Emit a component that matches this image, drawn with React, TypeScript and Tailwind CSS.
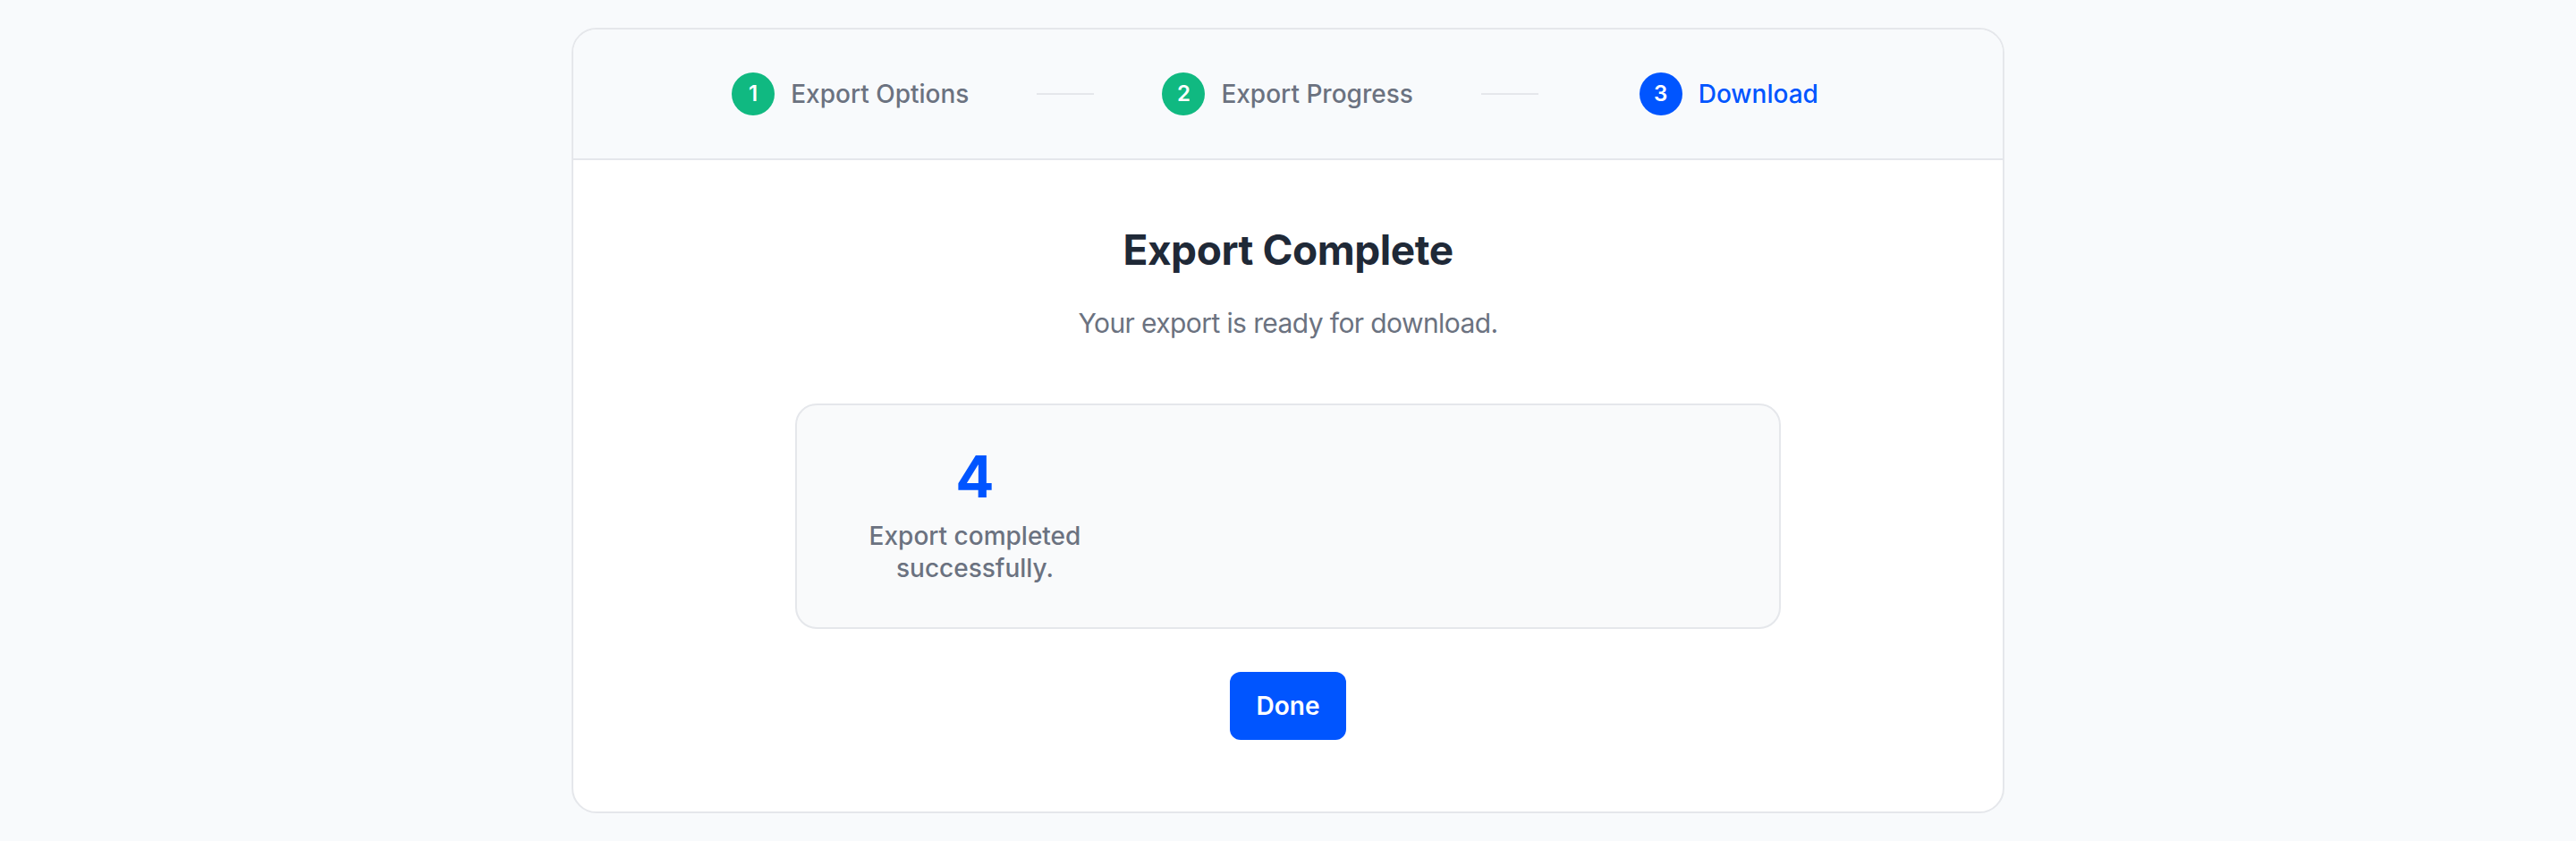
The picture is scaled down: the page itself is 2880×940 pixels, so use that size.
import React from "react";

const font = { fontFamily: "Inter, 'Noto Sans', sans-serif" };

function Step({ n, label, state }: { n: number; label: string; state: "done" | "active" }) {
  const active = state === "active";
  return (
    <div className="flex items-center gap-[18px]">
      <div
        className={`flex h-[48px] w-[48px] items-center justify-center rounded-full text-[24px] font-semibold text-white ${
          active ? "bg-[#0055ff]" : "bg-[#10b981]"
        }`}
      >
        {n}
      </div>
      <span className={`text-[28px] leading-[40px] font-medium ${active ? "text-[#0055ff]" : "text-[#6b7280]"}`}>
        {label}
      </span>
    </div>
  );
}

function Connector() {
  return <div className="h-[2px] w-[64px] bg-[#e5e7eb]" />;
}

export default function App() {
  return (
    <div className="min-h-[940px] w-full bg-[#f8fafc] pt-[31px]" style={font}>
      <div className="mx-auto w-[1602px] overflow-hidden rounded-[28px] border-2 border-[#e5e7eb] bg-white">
        <div className="flex items-center justify-center border-b-2 border-[#e5e7eb] bg-[#f8fafc] py-[48px]">
          <div className="flex items-center gap-[76px]">
            <Step n={1} label="Export Options" state="done" />
            <Connector />
            <Step n={2} label="Export Progress" state="done" />
            <Connector />
            <div className="flex w-[266px] justify-center pl-[8px]">
              <Step n={3} label="Download" state="active" />
            </div>
          </div>
        </div>
        <div className="flex flex-col items-center pt-[68px] pb-[80px]">
          <h1 className="text-[46px] leading-[64px] font-bold tracking-[-0.01em] text-[#1f2937]">Export Complete</h1>
          <p className="mt-[26px] text-[30px] leading-[48px] tracking-[-0.02em] text-[#6b7280]">
            Your export is ready for download.
          </p>
          <div className="mt-[66px] grid w-[1102px] grid-cols-3 gap-[48px] rounded-[24px] border-2 border-[#e5e7eb] bg-[#f9fafb] p-[48px]">
            <div className="flex flex-col items-center text-center">
              <div className="text-[64px] leading-[64px] font-bold text-[#0055ff]">4</div>
              <div className="mt-[16px] w-[280px] text-[28px] leading-[36px] font-medium text-[#6b7280]">
                Export completed successfully.
              </div>
            </div>
          </div>
          <button className="mt-[48px] h-[76px] rounded-[12px] bg-[#0055ff] px-[30px] text-[28px] font-semibold text-white">
            Done
          </button>
        </div>
      </div>
    </div>
  );
}
